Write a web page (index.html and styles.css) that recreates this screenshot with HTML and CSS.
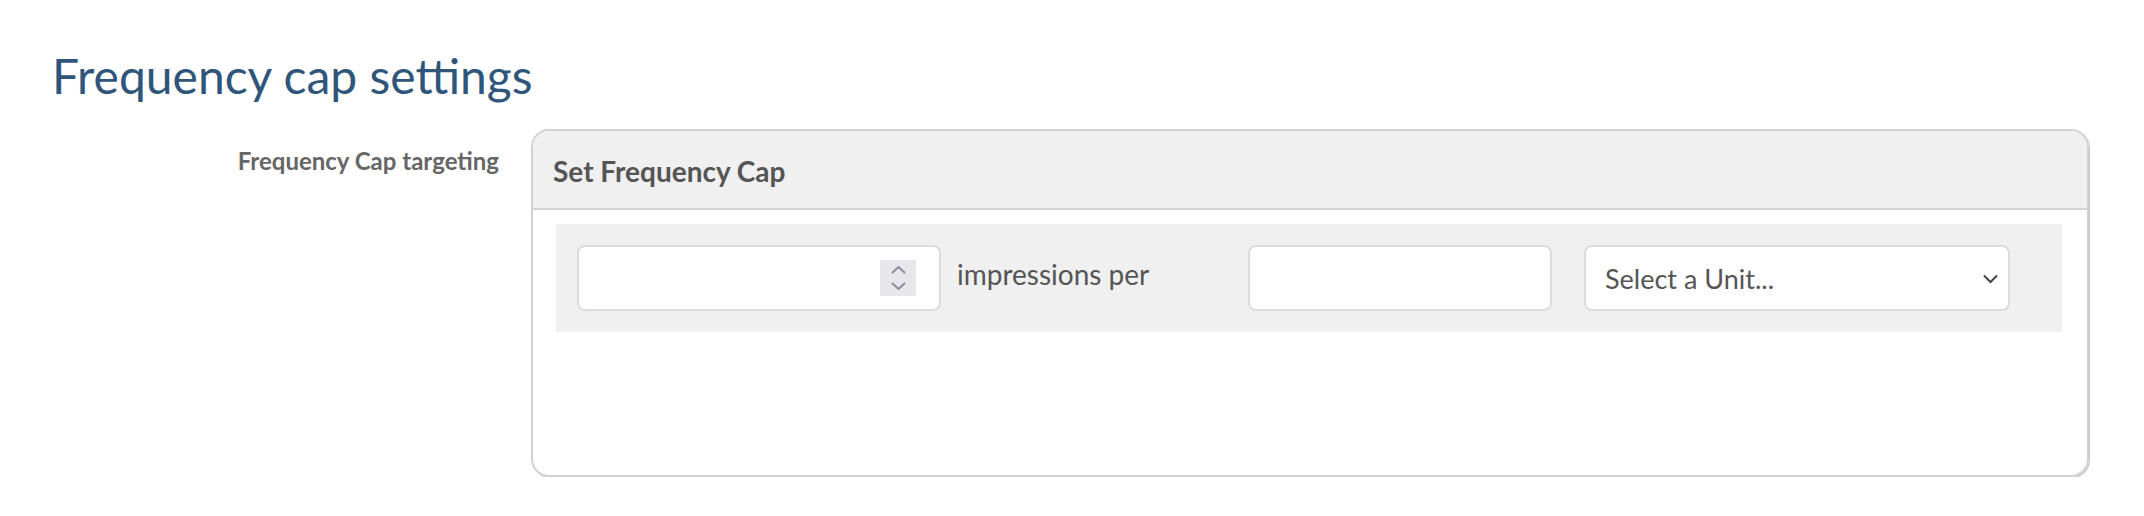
FILE: index.html
```html
<!DOCTYPE html>
<html lang="en">
  <head>
    <meta charset="UTF-8" />
    <title>Frequency cap settings</title>
    <link rel="stylesheet" href="styles.css">
  </head>
  <body>
    <!-- Section title -->
    <h1 class="section-title">Frequency cap settings</h1>

    <!-- Targeting row -->
    <div class="form-row">
      <label class="form-label">Frequency Cap targeting</label>

      <div class="panel">
        <div class="panel-header">Set Frequency Cap</div>
        <div class="panel-body">
          <div class="cap-row">
            <!-- Impressions count -->
            <div class="field field-count">
              <input type="text" class="field-input" />
              <span class="spin">
                <svg width="36" height="36" viewBox="0 0 36 36">
                  <path d="M12 13 L18.5 7 L25 13" fill="none" stroke="#8a8a9a" stroke-width="2" />
                  <path d="M12 23 L18.5 29 L25 23" fill="none" stroke="#8a8a9a" stroke-width="2" />
                </svg>
              </span>
            </div>

            <span class="cap-text">impressions per</span>

            <!-- Period length -->
            <div class="field field-period">
              <input type="text" class="field-input" />
            </div>

            <!-- Unit select -->
            <div class="field field-unit">
              <select class="unit-select">
                <option>Select a Unit...</option>
                <option>Minutes</option>
                <option>Hours</option>
                <option>Days</option>
              </select>
              <svg class="chevron" width="15" height="10" viewBox="0 0 15 10">
                <path d="M1 1.5 L7.5 8 L14 1.5" fill="none" stroke="#444" stroke-width="2" />
              </svg>
            </div>
          </div>
        </div>
      </div>
    </div>
  </body>
</html>
```

FILE: styles.css
```css
/* Basic Reset */
* {
  margin: 0;
  padding: 0;
  box-sizing: border-box;
}

body {
  font-family: Lato, "Open Sans", sans-serif;
  background-color: #fff;
  color: #555;
}

/* Title */
.section-title {
  font-size: 48px;
  font-weight: 400;
  line-height: 1.2;
  color: #30557a;
  padding: 47px 0 0 52px;
}

/* Label + panel row */
.form-row {
  display: flex;
  align-items: flex-start;
  gap: 32px;
  margin-top: 24px;
}

.form-label {
  width: 499px;
  flex-shrink: 0;
  text-align: right;
  font-size: 24px;
  font-weight: 700;
  line-height: 1.2;
  color: #666;
  margin-top: 18px;
}

/* Panel */
.panel {
  width: 1558px;
  border: 2px solid #d2d2d2;
  border-radius: 18px;
  box-shadow: 1px 1px 0 #c4c4c4;
  overflow: hidden;
}

.panel-header {
  background-color: #f0f0f0;
  border-bottom: 2px solid #d2d2d2;
  padding: 24px 20px 20px;
  font-size: 28px;
  font-weight: 700;
  line-height: 1.2;
  color: #555;
}

.panel-body {
  padding: 14px 25px 143px 23px;
}

.cap-row {
  display: flex;
  align-items: center;
  background-color: #f0f0f0;
  padding: 21px 21px;
}

/* Fields */
.field {
  position: relative;
  display: flex;
  align-items: center;
  height: 66px;
  background-color: #fff;
  border: 2px solid #dcdcdc;
  border-radius: 8px;
}

.field-count {
  width: 364px;
  padding-right: 23px;
}

.field-period {
  width: 304px;
}

.field-unit {
  width: 426px;
  margin-left: 32px;
}

.field-input {
  flex: 1;
  min-width: 0;
  height: 100%;
  border: none;
  outline: none;
  background: transparent;
  font-family: inherit;
  font-size: 26px;
  padding: 0 18px;
  color: #555;
}

.spin {
  display: flex;
  width: 36px;
  height: 36px;
  background-color: #e6e6eb;
}

.cap-text {
  width: 307px;
  flex-shrink: 0;
  padding-left: 16px;
  font-size: 28px;
  line-height: 1.2;
  color: #555;
  margin-top: -6px;
}

.unit-select {
  appearance: none;
  -webkit-appearance: none;
  width: 100%;
  height: 100%;
  border: none;
  outline: none;
  background: transparent;
  font-family: inherit;
  font-size: 27px;
  color: #555;
  padding: 0 40px 0 19px;
}

.chevron {
  position: absolute;
  right: 10px;
  top: 27px;
  pointer-events: none;
}
```
